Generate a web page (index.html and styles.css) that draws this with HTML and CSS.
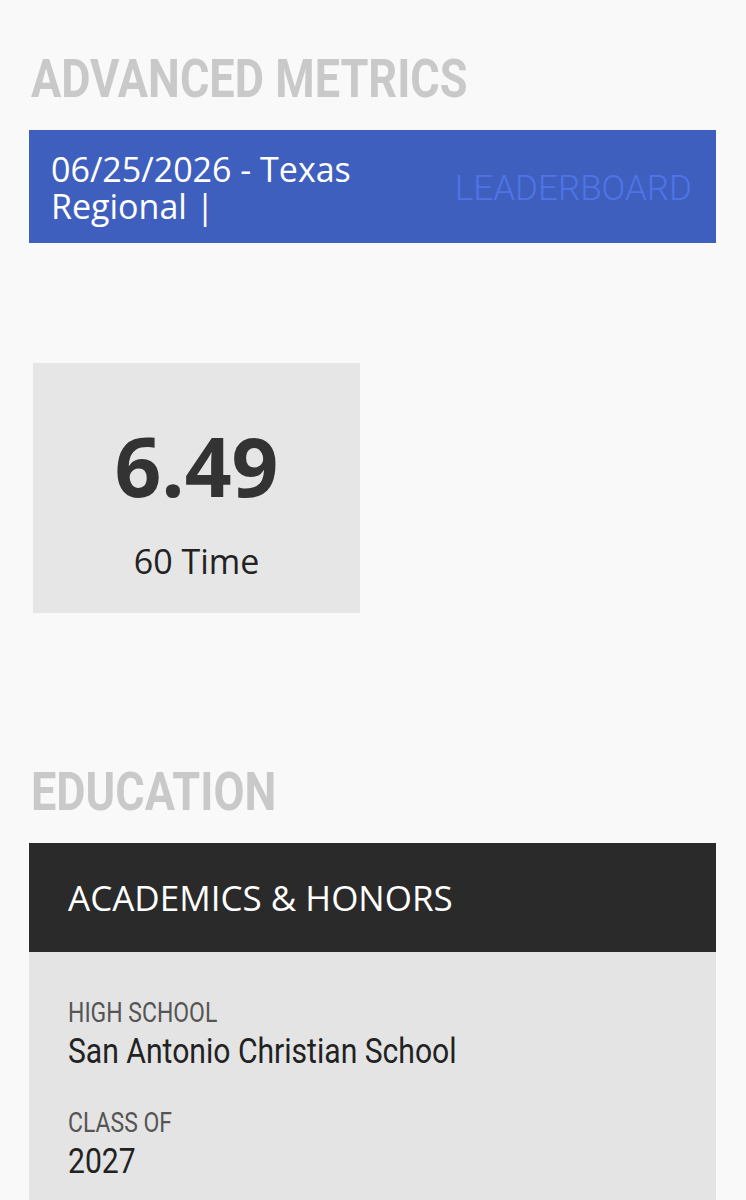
FILE: index.html
```html
<!DOCTYPE html>
<html lang="en">
<head>
  <meta charset="UTF-8" />
  <meta name="viewport" content="width=device-width, initial-scale=1" />
  <title>Player Profile</title>
  <link rel="stylesheet" href="styles.css">
</head>
<body>
  <h2 class="section-title"><span>ADVANCED METRICS</span></h2>
  <div class="event-bar">
    <div class="event-name">06/25/2026 - Texas<br>Regional |</div>
    <a class="event-link" href="#">LEADERBOARD</a>
  </div>

  <div class="metrics">
    <div class="metric">
      <div class="metric-value">6.49</div>
      <div class="metric-label">60 Time</div>
    </div>
  </div>

  <h2 class="section-title edu"><span>EDUCATION</span></h2>
  <div class="panel">
    <div class="panel-head">ACADEMICS &amp; HONORS</div>
    <div class="panel-body">
      <div class="field">
        <div class="field-label"><span>HIGH SCHOOL</span></div>
        <div class="field-value"><span>San Antonio Christian School</span></div>
      </div>
      <div class="field">
        <div class="field-label"><span>CLASS OF</span></div>
        <div class="field-value"><span>2027</span></div>
      </div>
    </div>
  </div>
</body>
</html>
```

FILE: styles.css
```css
body { margin: 0; padding: 0 30px 0 29px; background: #f9f9f9; color: #222; font-family: "Open Sans", sans-serif; }

/* condensed look: scale glyphs horizontally */
.section-title span, .field-label span, .field-value span { display: inline-block; transform-origin: left center; }

.section-title { margin: 53px 0 24px 2px; font-family: Roboto, sans-serif; font-weight: 700; font-size: 53px; line-height: 1; color: #c9c9c9; }
.section-title span { transform: scaleX(0.85); }
.section-title.edu { margin-top: 153px; }

.event-bar { display: flex; align-items: center; justify-content: space-between; height: 113px; padding: 0 24px 0 22px; background: #3f5fbf; }
.event-name { font-size: 34px; line-height: 37px; color: #fff; padding-top: 2px; }
.event-link { font-family: Roboto, sans-serif; font-weight: 300; font-size: 35px; color: #4f74e6; text-decoration: none; padding-top: 4px; }

.metrics { display: flex; margin: 120px 0 0 4px; }
.metric { width: 327px; height: 250px; background: #e6e6e6; text-align: center; box-sizing: border-box; padding-top: 61px; }
.metric-value { font-size: 82px; font-weight: 700; line-height: 1; color: #333; }
.metric-label { margin-top: 38px; font-size: 34px; line-height: 1; color: #222; }

.panel-head { height: 109px; display: flex; align-items: center; padding-left: 39px; background: #2a2a2a; color: #fff; font-size: 35px; }
.panel-body { background: #e4e4e4; padding: 47px 39px 21px; }
.field { margin-bottom: 40px; }
.field:last-child { margin-bottom: 0; }
.field-label { font-family: Roboto, sans-serif; font-size: 28px; line-height: 1; color: #555; margin-bottom: 7px; }
.field-label span { transform: scaleX(0.82); }
.field-value { font-family: Roboto, sans-serif; font-size: 35px; line-height: 1; color: #222; }
.field-value span { transform: scaleX(0.86); }
```
